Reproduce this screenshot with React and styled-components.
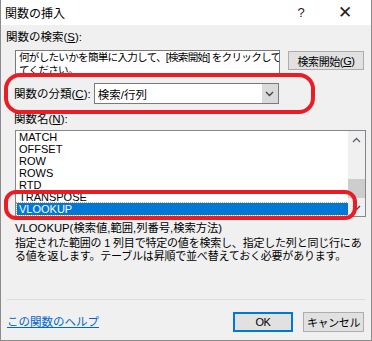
import React from "react";
import styled, { createGlobalStyle } from "styled-components";

const Global = createGlobalStyle`
  html, body { margin: 0; padding: 0; background: #f0f0f0; }
  * { box-sizing: border-box; }
`;

const FONT = `"Liberation Sans", "Noto Sans CJK JP", sans-serif`;

const Window = styled.div`
  position: relative;
  width: 372px;
  height: 341px;
  background: #f0f0f0;
  border: 1px solid #8c8c8c;
  border-top: none;
  font-family: ${FONT};
  font-size: 11.5px;
  color: #000;
  display: flex;
  flex-direction: column;
  overflow: hidden;
`;

const TitleBar = styled.div`
  height: 25px;
  background: #fff;
  display: flex;
  align-items: center;
  padding-left: 4px;
  font-size: 12px;
`;

const Title = styled.span`
  flex: 1;
`;

const TitleBtn = styled.span`
  width: ${(p) => p.w}px;
  margin-right: ${(p) => p.mr || 0}px;
  text-align: center;
  font-size: ${(p) => p.size || 13}px;
  color: #222;
`;

const Body = styled.div`
  flex: 1;
  display: flex;
  flex-direction: column;
  padding: 5px 6px 0 5px;
`;

const Label = styled.div`
  height: 14px;
  line-height: 14px;
  margin-left: ${(p) => p.indent || 0}px;
  u { text-decoration: underline; }
`;

const SearchRow = styled.div`
  display: flex;
  align-items: flex-start;
  gap: 8px;
  margin: 6px 0 0 9px;
`;

const SearchBox = styled.div`
  width: 265px;
  height: 25px;
  background: #fff;
  border: 1px solid #7a7a7a;
  padding: 0 3px;
  line-height: 13px;
  font-size: 10.6px;
  letter-spacing: -0.75px;
  overflow: hidden;
  white-space: nowrap;
`;

const Button = styled.div`
  height: ${(p) => p.h || 19}px;
  width: ${(p) => p.w}px;
  background: #e1e1e1;
  border: ${(p) => (p.primary ? "2px solid #0078d7" : "1px solid #adadad")};
  display: flex;
  align-items: center;
  justify-content: center;
  font-size: 11px;
  letter-spacing: -0.4px;
  white-space: nowrap;
  margin-top: ${(p) => p.mt || 0}px;
`;

const CategoryRow = styled.div`
  display: flex;
  align-items: center;
  gap: 3px;
  margin: 8px 0 0 8px;
`;

const Select = styled.div`
  width: 185px;
  height: 21px;
  background: #fff;
  border: 1px solid #7a7a7a;
  display: flex;
  align-items: center;
`;

const SelectValue = styled.div`
  flex: 1;
  padding-left: 3px;
`;

const SelectArrow = styled.div`
  width: 16px;
  height: 19px;
  background: #dadada;
  display: flex;
  align-items: center;
  justify-content: center;
`;

const ListBox = styled.div`
  margin: 4px 0 0 9px;
  width: 351px;
  height: 87px;
  background: #fff;
  border: 1px solid #828790;
  display: flex;
`;

const Items = styled.div`
  flex: 1;
  overflow: hidden;
  font-size: 11px;
`;

const Item = styled.div`
  height: 12px;
  line-height: 12px;
  padding-left: 2px;
  margin-left: 1px;
  background: ${(p) => (p.selected ? "#0078d7" : "transparent")};
  color: ${(p) => (p.selected ? "#fff" : "#000")};
  outline: ${(p) => (p.selected ? "1px dotted #e8a040" : "none")};
`;

const ScrollBar = styled.div`
  width: 17px;
  background: #f0f0f0;
  display: flex;
  flex-direction: column;
  align-items: center;
`;

const ScrollArrow = styled.div`
  height: 17px;
  width: 17px;
  display: flex;
  align-items: center;
  justify-content: center;
`;

const ScrollTrack = styled.div`
  flex: 1;
  width: 100%;
  display: flex;
  flex-direction: column;
  justify-content: flex-end;
  padding-bottom: 1px;
`;

const Thumb = styled.div`
  height: 19px;
  background: #cdcdcd;
`;

const Signature = styled.div`
  margin: 4px 0 0 9px;
  line-height: 14px;
  font-size: 11.3px;
`;

const Description = styled.div`
  margin: 2px 0 0 9px;
  line-height: 12.5px;
  font-size: 11px;
  letter-spacing: -0.2px;
`;

const Spacer = styled.div`
  flex: 1;
`;

const Separator = styled.div`
  height: 1px;
  background: #dcdcdc;
  margin: 0 0 0 1px;
`;

const Footer = styled.div`
  display: flex;
  align-items: flex-end;
  height: 40px;
  padding: 0 1px 8px 1px;
  gap: 10px;
`;

const HelpLink = styled.a`
  color: #0066cc;
  text-decoration: underline;
  flex: 1;
  line-height: 20px;
`;

const Annotation = styled.div`
  position: absolute;
  left: ${(p) => p.x}px;
  top: ${(p) => p.y}px;
  width: ${(p) => p.w}px;
  height: ${(p) => p.h}px;
  border: 4px solid #ea1c24;
  border-radius: ${(p) => p.r}px;
  pointer-events: none;
`;

const Chevron = ({ up }) => (
  <svg width="9" height="6" viewBox="0 0 9 6">
    <path
      d={up ? "M1 5 L4.5 1.5 L8 5" : "M1 1 L4.5 4.5 L8 1"}
      fill="none"
      stroke={up ? "#606060" : "#404040"}
      strokeWidth="1.3"
    />
  </svg>
);

const names = ["MATCH", "OFFSET", "ROW", "ROWS", "RTD", "TRANSPOSE", "VLOOKUP"];

export default function App() {
  return (
    <>
      <Global />
      <Window>
        <TitleBar>
          <Title>関数の挿入</Title>
          <TitleBtn w={20} mr={8} size={13}>?</TitleBtn>
          <TitleBtn w={52} size={17}>✕</TitleBtn>
        </TitleBar>
        <Body>
          <Label>
            関数の検索(<u>S</u>):
          </Label>
          <SearchRow>
            <SearchBox>
              何がしたいかを簡単に入力して、[検索開始] をクリックして
              <br />
              てください。
            </SearchBox>
            <Button w={76} mt={1}>
              検索開始(<u>G</u>)
            </Button>
          </SearchRow>
          <CategoryRow>
            <Label>
              関数の分類(<u>C</u>):
            </Label>
            <Select>
              <SelectValue>検索/行列</SelectValue>
              <SelectArrow>
                <Chevron />
              </SelectArrow>
            </Select>
          </CategoryRow>
          <Label indent={8} style={{ marginTop: 8 }}>
            関数名(<u>N</u>):
          </Label>
          <ListBox>
            <Items>
              {names.map((n) => (
                <Item key={n} selected={n === "VLOOKUP"}>
                  {n}
                </Item>
              ))}
            </Items>
            <ScrollBar>
              <ScrollArrow>
                <Chevron up />
              </ScrollArrow>
              <ScrollTrack>
                <Thumb />
              </ScrollTrack>
              <ScrollArrow>
                <Chevron up={false} />
              </ScrollArrow>
            </ScrollBar>
          </ListBox>
          <Signature>VLOOKUP(検索値,範囲,列番号,検索方法)</Signature>
          <Description>
            指定された範囲の 1 列目で特定の値を検索し、指定した列と同じ行にあ
            <br />
            る値を返します。テーブルは昇順で並べ替えておく必要があります。
          </Description>
          <Spacer />
          <Separator />
          <Footer>
            <HelpLink>この関数のヘルプ</HelpLink>
            <Button w={60} h={20} primary>
              OK
            </Button>
            <Button w={61} h={20}>
              キャンセル
            </Button>
          </Footer>
        </Body>
        <Annotation x={3} y={73} w={311} h={41} r={16} />
        <Annotation x={3} y={190} w={353} h={30} r={12} />
      </Window>
    </>
  );
}
